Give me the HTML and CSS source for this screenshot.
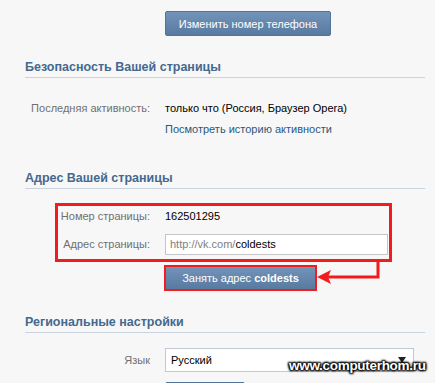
FILE: index.html
```html
<!DOCTYPE html>
<html lang="ru">
<head>
    <meta charset="UTF-8">
    <title>Настройки</title>
    <link rel="stylesheet" href="styles.css">
</head>
<body>

<div class="page">
    <div class="actions">
        <button class="btn" type="button">Изменить номер телефона</button>
    </div>

    <h2 class="section">Безопасность Вашей страницы</h2>
    <div class="row row-first">
        <div class="label">Последняя активность:</div>
        <div class="value">только что (Россия, Браузер Opera)</div>
    </div>
    <div class="row row-link">
        <div class="label"></div>
        <a class="link" href="#">Посмотреть историю активности</a>
    </div>

    <h2 class="section section-addr">Адрес Вашей страницы</h2>
    <div class="claim">
        <div class="mark">
            <div class="row">
                <div class="label">Номер страницы:</div>
                <div class="value">162501295</div>
            </div>
            <div class="row row-field">
                <div class="label">Адрес страницы:</div>
                <div class="field"><span class="prefix">http://vk.com/</span>coldests</div>
            </div>
        </div>
        <div class="actions">
            <button class="btn btn-mark" type="button">Занять адрес <b>coldests</b></button>
        </div>
        <svg class="arrow" width="65" height="25" viewBox="0 0 65 25">
            <polyline points="62,0 62,18 12,18" fill="none" stroke="#f21c1c" stroke-width="3"/>
            <polygon points="1,18 15,11 12,18 15,25" fill="#f21c1c"/>
        </svg>
    </div>

    <h2 class="section">Региональные настройки</h2>
    <div class="row row-select">
        <div class="label">Язык</div>
        <div class="select">Русский<span class="caret"></span></div>
    </div>
    <div class="actions">
        <button class="btn btn-save" type="button"></button>
    </div>
</div>

<div class="watermark">www.computerhom.ru</div>

</body>
</html>
```

FILE: styles.css
```css
body {
    margin: 0;
    height: 383px;
    background-color: #f7f7f7;
    font-family: "Liberation Sans", Arial, sans-serif;
    font-size: 11px;
    color: #000;
    overflow: hidden;
}
.page {
    width: 400px;
    padding: 11px 0 0 25px;
}
.actions {
    padding-left: 140px;
}
.btn {
    display: block;
    width: 166px;
    height: 25px;
    padding: 0;
    font-family: "Liberation Sans", Arial, sans-serif;
    font-size: 11px;
    color: #fff;
    background: linear-gradient(#7394b9, #587aa1);
    border: 1px solid #52739a;
    border-radius: 2px;
}
.btn b {
    font-weight: bold;
}
.btn-mark {
    width: 153px;
    height: 26px;
    margin: 3px 0 0 -1px;
    border: 2px solid #f21c1c;
    border-radius: 0;
}
.btn-save {
    width: 80px;
    height: 25px;
    margin-top: 10px;
}
.section {
    margin: 23px 0 0;
    padding: 0 0 2px;
    font-size: 12.5px;
    line-height: 16px;
    font-weight: bold;
    color: #45688e;
    border-bottom: 1px solid #c9d3de;
}
.section-addr {
    margin-top: 34px;
}
.row {
    display: grid;
    grid-template-columns: 125px 1fr;
    column-gap: 15px;
    align-items: center;
    line-height: 13px;
    margin-top: 22px;
    white-space: nowrap;
}
.row-first {
    margin-top: 24px;
}
.row-link {
    margin-top: 8px;
}
.label {
    text-align: right;
    color: #707070;
}
.link {
    color: #2b587a;
    text-decoration: none;
}
.claim {
    position: relative;
    margin-top: 14px;
}
.mark {
    width: 331px;
    margin-left: 30px;
    padding: 0 0 4px;
    border: 3px solid #f21c1c;
}
.mark .row {
    grid-template-columns: 92px 1fr;
    margin-top: 4px;
}
.mark .row-field {
    margin-top: 11px;
}
.field {
    width: 213px;
    height: 19px;
    line-height: 19px;
    padding: 0 4px;
    background: #fff;
    border: 1px solid #c5c5c5;
}
.prefix {
    color: #808080;
}
.arrow {
    position: absolute;
    left: 291px;
    top: 56px;
}
.row-select {
    margin-top: 15px;
}
.select {
    position: relative;
    width: 242px;
    height: 22px;
    line-height: 22px;
    padding: 0 0 0 5px;
    background: #fff;
    border: 1px solid #c0c8d2;
}
.caret {
    position: absolute;
    right: 7px;
    top: 8px;
    border-left: 4px solid transparent;
    border-right: 4px solid transparent;
    border-top: 6px solid #222;
}
.watermark {
    position: absolute;
    left: 289px;
    top: 358px;
    font-family: "Liberation Sans", Arial, sans-serif;
    font-size: 13.5px;
    font-weight: bold;
    letter-spacing: -0.3px;
    color: #fff;
    text-shadow: 0 0 2px #000, 0 0 2px #000, 1px 1px 2px #000, -1px -1px 2px #000, 1px -1px 2px #000, -1px 1px 2px #000;
}
```
